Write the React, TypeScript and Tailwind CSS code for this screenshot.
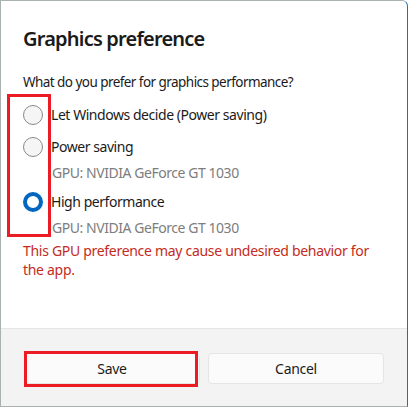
import React, { useState } from 'react';

type Option = {
    id: string;
    label: string;
    gpu?: string;
};

const options: Option[] = [
    { id: 'auto', label: 'Let Windows decide (Power saving)' },
    { id: 'power', label: 'Power saving', gpu: 'GPU: NVIDIA GeForce GT 1030' },
    { id: 'high', label: 'High performance', gpu: 'GPU: NVIDIA GeForce GT 1030' },
];

const Radio: React.FC<{ checked: boolean }> = ({ checked }) =>
    checked ? (
        <span className="block w-[20px] h-[20px] shrink-0 rounded-full border-[4px] border-[#0067c0] bg-white" />
    ) : (
        <span className="block w-[20px] h-[20px] shrink-0 rounded-full border border-[#8a8a8a] bg-[#f5f5f5]" />
    );

const App: React.FC = () => {
    const [choice, setChoice] = useState('high');

    return (
        <div className="w-[410px] h-[409px] bg-white" style={{ fontFamily: '"Noto Sans", "Open Sans", sans-serif' }}>
            <div className="w-[408px] h-[407px] flex flex-col border border-[#a9b1b1] border-r-[#1b6fc2] rounded-tr-[6px] overflow-hidden">
                <div className="relative flex-1 px-[22px] pt-[24px]">
                    <h1 className="text-[20px] leading-[28px] font-semibold text-[#1a1a1a] tracking-[-0.8px]">
                        Graphics preference
                    </h1>
                    <p className="mt-[19px] text-[13.5px] leading-[20px] text-[#1b1b1b] tracking-[-0.55px]">
                        What do you prefer for graphics performance?
                    </p>

                    <div className="mt-[13px]">
                        {options.map((opt, index) => (
                            <div key={opt.id} className={index === 0 ? '' : index === 1 ? 'mt-[12px]' : 'mt-[9px]'}>
                                <button
                                    type="button"
                                    onClick={() => setChoice(opt.id)}
                                    className="flex items-center gap-[8px] h-[20px] text-[14px] leading-[20px] text-[#1b1b1b] tracking-[-0.45px]"
                                >
                                    <Radio checked={choice === opt.id} />
                                    {opt.label}
                                </button>
                                {opt.gpu && (
                                    <p className="mt-[6px] pl-[29px] text-[14px] leading-[20px] text-[#7d7d7d] tracking-[-0.45px]">
                                        {opt.gpu}
                                    </p>
                                )}
                            </div>
                        ))}
                    </div>

                    <p className="mt-[3px] max-w-[358px] text-[14px] leading-[19px] text-[#c42b1c] tracking-[-0.3px]">
                        This GPU preference may cause undesired behavior for the app.
                    </p>

                    {/* annotation box */}
                    <span className="absolute left-[6px] top-[93px] w-[44px] h-[143px] border-[3px] border-[#ec1c24]" />
                </div>

                <div className="h-[78px] border-t border-[#e5e5e5] bg-[#f3f3f3] px-[23px] pt-[24px]">
                    <div className="grid grid-cols-2 gap-[8px]">
                        <div className="relative">
                            <button
                                type="button"
                                className="w-full h-[31px] rounded-[4px] border border-[#e5e5e5] bg-[#fbfbfb] text-[14px] text-[#1b1b1b] tracking-[-0.3px]"
                            >
                                Save
                            </button>
                            <span className="absolute left-0 right-[2px] top-[-2px] bottom-[-3px] border-[3px] border-[#ec1c24]" />
                        </div>
                        <button
                            type="button"
                            className="w-full h-[31px] rounded-[4px] border border-[#e5e5e5] bg-[#fbfbfb] text-[14px] text-[#1b1b1b] tracking-[-0.3px]"
                        >
                            Cancel
                        </button>
                    </div>
                </div>
            </div>
        </div>
    );
};

export default App;
